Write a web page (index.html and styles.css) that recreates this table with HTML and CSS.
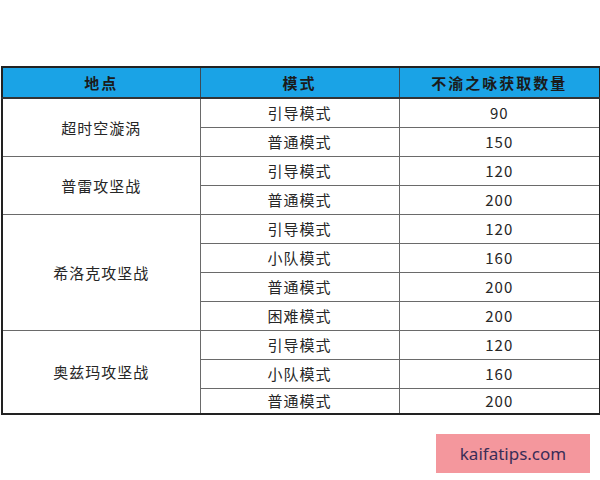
FILE: index.html
```html
<!DOCTYPE html>
<html lang="zh">
<head>
<meta charset="utf-8">
<link rel="stylesheet" href="styles.css">
</head>
<body>
<table class="tbl">
  <colgroup><col class="c1"><col class="c2"><col class="c3"></colgroup>
  <thead>
    <tr class="head"><th>地点</th><th>模式</th><th>不渝之咏获取数量</th></tr>
  </thead>
  <tbody>
    <tr class="grp"><td rowspan="2">超时空漩涡</td><td>引导模式</td><td>90</td></tr>
    <tr><td>普通模式</td><td>150</td></tr>
    <tr class="grp"><td rowspan="2">普雷攻坚战</td><td>引导模式</td><td>120</td></tr>
    <tr><td>普通模式</td><td>200</td></tr>
    <tr class="grp"><td rowspan="4">希洛克攻坚战</td><td>引导模式</td><td>120</td></tr>
    <tr><td>小队模式</td><td>160</td></tr>
    <tr><td>普通模式</td><td>200</td></tr>
    <tr><td>困难模式</td><td>200</td></tr>
    <tr class="grp"><td rowspan="3">奥兹玛攻坚战</td><td>引导模式</td><td>120</td></tr>
    <tr><td>小队模式</td><td>160</td></tr>
    <tr class="last"><td>普通模式</td><td>200</td></tr>
  </tbody>
</table>
<div class="mark">kaifatips.com</div>
</body>
</html>
```
FILE: styles.css
```css
html, body {
  margin: 0;
  padding: 0;
  background: #ffffff;
}
body {
  font-family: "Noto Sans CJK SC", "Noto Sans", sans-serif;
  color: #222222;
}
.tbl {
  margin: 66px 0 0 1px;
  width: 598px;
  border-collapse: collapse;
  border: 2px solid #222222;
  table-layout: fixed;
}
.c1 { width: 198px; }
.c2 { width: 199px; }
.c3 { width: 201px; }
.tbl th, .tbl td {
  border: 1px solid #6a6a6a;
  padding: 0;
  text-align: center;
  vertical-align: middle;
  font-size: 15px;
  line-height: 20px;
  letter-spacing: 1px;
}
.head th {
  background: #1aa3e6;
  height: 29px;
  font-weight: bold;
  color: #1b1b1b;
  letter-spacing: 2px;
  border-bottom: 2px solid #333333;
  border-left-color: #3d4a55;
  border-right-color: #3d4a55;
}
.tbl td {
  height: 28px;
  font-weight: normal;
  color: #262626;
}
.tbl tr.last td {
  height: 24px;
}
.grp td {
  border-top-color: #555555;
}
.mark {
  margin: 19px 0 0 436px;
  width: 154px;
  height: 39px;
  background: #f4979d;
  color: #3a2d57;
  font-family: "Noto Sans", sans-serif;
  font-size: 17px;
  line-height: 39px;
  text-align: center;
}
```
